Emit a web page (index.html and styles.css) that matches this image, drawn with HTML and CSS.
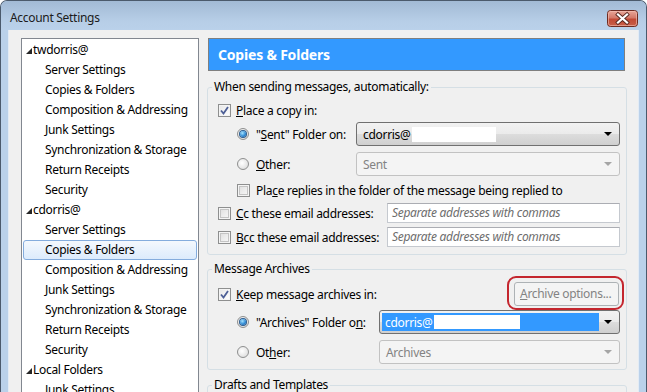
FILE: index.html
```html
<!DOCTYPE html>
<html lang="en">
<head>
    <meta charset="UTF-8">
    <title>Account Settings</title>
    <link rel="stylesheet" href="styles.css">
</head>
<body>
    <div class="window">
        <div class="titlebar">
            <span class="title">Account Settings</span>
            <span class="close-btn">
                <svg width="31" height="17" viewBox="0 0 31 17">
                    <defs>
                        <linearGradient id="cg" x1="0" y1="0" x2="0" y2="1">
                            <stop offset="0" stop-color="#e9a99b"/>
                            <stop offset="0.45" stop-color="#d47a6a"/>
                            <stop offset="0.55" stop-color="#c24a35"/>
                            <stop offset="1" stop-color="#c8604a"/>
                        </linearGradient>
                    </defs>
                    <rect x="0.5" y="0.5" width="30" height="16" rx="3" fill="url(#cg)" stroke="#6e2c22"/>
                    <rect x="1.5" y="1.5" width="28" height="14" rx="2" fill="none" stroke="#f3c2b6" stroke-opacity="0.6"/>
                    <path d="M11 4.5 L20 12.5 M20 4.5 L11 12.5" stroke="#5a2a22" stroke-width="4" stroke-linecap="square"/>
                    <path d="M11 4.5 L20 12.5 M20 4.5 L11 12.5" stroke="#ffffff" stroke-width="2.2" stroke-linecap="square"/>
                </svg>
            </span>
        </div>

        <div class="client">
            <!-- account tree -->
            <div class="tree">
                <div class="tree-row parent"><svg class="twisty" width="6" height="6" viewBox="0 0 6 6"><polygon points="6,0 6,6 0,6"/></svg>twdorris@</div>
                <div class="tree-row">Server Settings</div>
                <div class="tree-row">Copies &amp; Folders</div>
                <div class="tree-row">Composition &amp; Addressing</div>
                <div class="tree-row">Junk Settings</div>
                <div class="tree-row">Synchronization &amp; Storage</div>
                <div class="tree-row">Return Receipts</div>
                <div class="tree-row">Security</div>
                <div class="tree-row parent"><svg class="twisty" width="6" height="6" viewBox="0 0 6 6"><polygon points="6,0 6,6 0,6"/></svg>cdorris@</div>
                <div class="tree-row">Server Settings</div>
                <div class="tree-row selected">Copies &amp; Folders</div>
                <div class="tree-row">Composition &amp; Addressing</div>
                <div class="tree-row">Junk Settings</div>
                <div class="tree-row">Synchronization &amp; Storage</div>
                <div class="tree-row">Return Receipts</div>
                <div class="tree-row">Security</div>
                <div class="tree-row parent"><svg class="twisty" width="6" height="6" viewBox="0 0 6 6"><polygon points="6,0 6,6 0,6"/></svg>Local Folders</div>
                <div class="tree-row">Junk Settings</div>
            </div>

            <!-- settings pane -->
            <div class="pane">
                <div class="pane-header">Copies &amp; Folders</div>

                <fieldset class="group sending">
                    <legend>When sending messages, automatically:</legend>
                    <div class="row r-copy">
                        <span class="checkbox checked"><svg width="9" height="9" viewBox="0 0 9 9"><path d="M1 4.5 L3.5 7.5 L8 1" fill="none" stroke="#4d5f96" stroke-width="1.8"/></svg></span>
                        <span class="label"><u>P</u>lace a copy in:</span>
                    </div>
                    <div class="row indent r-sent">
                        <span class="radio selected"><span class="dot"></span></span>
                        <span class="label fixed-sent">"<u>S</u>ent" Folder on:</span>
                        <div class="dropdown">
                            <span class="value">cdorris@<span class="redact"></span></span>
                            <span class="arrow"></span>
                        </div>
                    </div>
                    <div class="row indent r-other">
                        <span class="radio"></span>
                        <span class="label fixed-sent"><u>O</u>ther:</span>
                        <div class="dropdown disabled">
                            <span class="value">Sent</span>
                            <span class="arrow"></span>
                        </div>
                    </div>
                    <div class="row indent r-replies">
                        <span class="checkbox"></span>
                        <span class="label">Pla<u>c</u>e replies in the folder of the message being replied to</span>
                    </div>
                    <div class="row r-cc">
                        <span class="checkbox"></span>
                        <span class="label fixed-cc"><u>C</u>c these email addresses:</span>
                        <div class="textbox">Separate addresses with commas</div>
                    </div>
                    <div class="row r-bcc">
                        <span class="checkbox"></span>
                        <span class="label fixed-cc"><u>B</u>cc these email addresses:</span>
                        <div class="textbox">Separate addresses with commas</div>
                    </div>
                </fieldset>

                <fieldset class="group archives">
                    <legend>Message Archives</legend>
                    <div class="row r-keep">
                        <span class="checkbox checked"><svg width="9" height="9" viewBox="0 0 9 9"><path d="M1 4.5 L3.5 7.5 L8 1" fill="none" stroke="#4d5f96" stroke-width="1.8"/></svg></span>
                        <span class="label"><u>K</u>eep message archives in:</span>
                        <div class="button-wrap">
                            <span class="button disabled"><u>A</u>rchive options...</span>
                            <span class="ring"></span>
                        </div>
                    </div>
                    <div class="row indent r-afolder">
                        <span class="radio selected"><span class="dot"></span></span>
                        <span class="label fixed-arch">"Archives" Folder o<u>n</u>:</span>
                        <div class="dropdown focused">
                            <span class="value">cdorris@<span class="redact"></span></span>
                            <span class="arrow"></span>
                        </div>
                    </div>
                    <div class="row indent r-aother">
                        <span class="radio"></span>
                        <span class="label fixed-arch">Ot<u>h</u>er:</span>
                        <div class="dropdown disabled">
                            <span class="value">Archives</span>
                            <span class="arrow"></span>
                        </div>
                    </div>
                </fieldset>

                <fieldset class="group drafts">
                    <legend>Drafts and Templates</legend>
                    <div class="row"></div>
                </fieldset>
            </div>
        </div>
    </div>
</body>
</html>
```

FILE: styles.css
```css
body {
    margin: 0;
    background: #ffffff;
    font-family: "Noto Sans", "Open Sans", sans-serif;
    font-size: 12px;
    letter-spacing: -0.3px;
    color: #000;
}
.window {
    width: 645px;
    height: 391px;
    border: 1px solid #4b5a6c;
    border-bottom: none;
    border-radius: 7px 7px 0 0;
    background: #bad1ea;
    overflow: hidden;
}
.titlebar {
    height: 29px;
    display: flex;
    align-items: center;
    justify-content: space-between;
    padding: 0 8px 0 9px;
    background: linear-gradient(#a2bad5, #b7cee7 70%, #bad1ea);
}
.title {
    font-size: 12px;
    color: #1b1b1b;
    padding-top: 4px;
}
.close-btn {
    display: block;
    margin-top: 5px;
    height: 17px;
}
.client {
    display: flex;
    align-items: flex-start;
    margin: 0 7px 0 7px;
    height: 362px;
    padding: 8px 0 0 12px;
    background: #f0f0f0;
    border-right: 1px solid #e2ebf5;
    border-left: 1px solid #e2ebf5;
    box-sizing: border-box;
}

/* tree */
.tree {
    width: 178px;
    height: 400px;
    flex: none;
    box-sizing: border-box;
    background: #fff;
    border: 1px solid #828790;
    padding-top: 1px;
}
.tree-row {
    height: 18px;
    line-height: 18px;
    margin: 0 1px;
    border: 1px solid transparent;
    border-radius: 3px;
    padding-left: 21px;
    white-space: nowrap;
}
.tree-row.parent {
    padding-left: 2px;
}
.twisty {
    fill: #262626;
    margin-right: 1px;
    vertical-align: 0;
}
.tree-row.selected {
    border-color: #84acdd;
    background: linear-gradient(#f4f8fd, #dcebfc);
}

/* right pane */
.pane {
    width: 420px;
    margin-left: 8px;
    flex: none;
}
.pane-header {
    width: 417px;
    height: 33px;
    margin-left: 1px;
    box-sizing: border-box;
    border: 1px solid #7f7f7f;
    background: #3399ff;
    color: #fff;
    font-weight: bold;
    font-size: 14px;
    letter-spacing: -0.2px;
    line-height: 31px;
    padding-left: 9px;
}
.group {
    margin: 8px 0 0 0;
    border: 1px solid #d5dfe5;
    border-radius: 3px;
    padding: 0 6px 7px 10px;
    min-width: 0;
}
.group legend {
    margin-left: -6px;
    padding: 0 2px;
    line-height: 16px;
}
.archives {
    margin-top: 6px;
    padding-bottom: 5px;
}
.drafts {
    margin-top: 7px;
}
.drafts .row {
    height: 40px;
}

.row {
    display: flex;
    align-items: center;
    height: 20px;
}
.row.indent {
    padding-left: 19px;
}
.r-copy { margin-top: 5px; }
.r-sent { margin-top: 2px; height: 24px; }
.r-other { margin-top: 6px; height: 24px; }
.r-replies { margin-top: 4px; }
.r-cc { margin-top: 3px; }
.r-bcc { margin-top: 4px; }
.r-keep { margin-top: 5px; height: 24px; }
.r-afolder { margin-top: 4px; height: 24px; }
.r-aother { margin-top: 6px; height: 24px; }

.label {
    margin-left: 5px;
    white-space: nowrap;
}
.indent .label {
    margin-left: 7px;
}
.indent .checkbox + .label {
    margin-left: 6px;
}
.fixed-sent {
    width: 100px;
    flex: none;
}
.fixed-cc {
    width: 151px;
    flex: none;
}
.fixed-arch {
    width: 123px;
    flex: none;
}

/* checkbox and radio */
.checkbox {
    width: 13px;
    height: 13px;
    flex: none;
    box-sizing: border-box;
    border: 1px solid #8e8f8f;
    background: linear-gradient(135deg, #dcdcdc, #fbfbfb);
    box-shadow: inset 0 0 0 1px #f4f4f4, inset 0 0 0 2px #c4c4c4;
    display: flex;
    align-items: center;
    justify-content: center;
}
.checkbox.checked {
    box-shadow: inset 0 0 0 1px #f4f4f4;
    background: linear-gradient(135deg, #e6e6e6, #ffffff);
}
.radio {
    width: 12px;
    height: 12px;
    flex: none;
    box-sizing: border-box;
    border: 1px solid #8e8f8f;
    border-radius: 50%;
    background: radial-gradient(circle at 40% 40%, #ffffff, #d6d6d6);
    display: flex;
    align-items: center;
    justify-content: center;
}
.radio .dot {
    width: 6px;
    height: 6px;
    border-radius: 50%;
    background: radial-gradient(circle at 40% 35%, #a6e3ff, #2a86d3 60%, #1d4d8a);
    box-shadow: 0 0 0 1px #2c5d8f;
}

/* dropdowns */
.dropdown {
    flex: 1;
    height: 24px;
    box-sizing: border-box;
    border: 1px solid #707070;
    border-radius: 3px;
    background: linear-gradient(#f2f2f2, #ebebeb 50%, #dddddd 50%, #cfcfcf);
    display: flex;
    align-items: center;
    justify-content: space-between;
    padding: 0 7px 0 6px;
}
.dropdown .value {
    display: flex;
    align-items: center;
}
.redact {
    display: inline-block;
    width: 84px;
    height: 15px;
    background: #fff;
    margin-left: 1px;
}
.arrow {
    width: 0;
    height: 0;
    border-left: 4px solid transparent;
    border-right: 4px solid transparent;
    border-top: 4px solid #000;
}
.dropdown.disabled {
    border-color: #c2c2c2;
    background: #f4f4f4;
    color: #838383;
}
.dropdown.disabled .arrow {
    border-top-color: #a5a5a5;
}
.dropdown.focused {
    padding: 2px 7px 2px 2px;
}
.dropdown.focused .value {
    align-self: stretch;
    width: 214px;
    background: #3399ff;
    color: #fff;
    padding-left: 3px;
}
.dropdown.focused .redact {
    width: 86px;
    height: 14px;
}

/* text fields */
.textbox {
    flex: 1;
    height: 20px;
    box-sizing: border-box;
    border: 1px solid #c5c9cf;
    border-top-color: #abadb3;
    background: #fff;
    color: #6d6d6d;
    font-style: italic;
    line-height: 18px;
    padding-left: 4px;
}

/* button */
.button-wrap {
    margin-left: auto;
    margin-right: 1px;
    position: relative;
}
.button {
    display: block;
    width: 105px;
    height: 24px;
    box-sizing: border-box;
    border: 1px solid #adb2b5;
    border-radius: 3px;
    background: #f4f4f4;
    line-height: 22px;
    padding-left: 5px;
}
.button.disabled {
    color: #838383;
}
.ring {
    position: absolute;
    left: -7px;
    top: -6px;
    right: -5px;
    bottom: -4px;
    border: 2px solid #c4262e;
    border-radius: 9px;
}
```
